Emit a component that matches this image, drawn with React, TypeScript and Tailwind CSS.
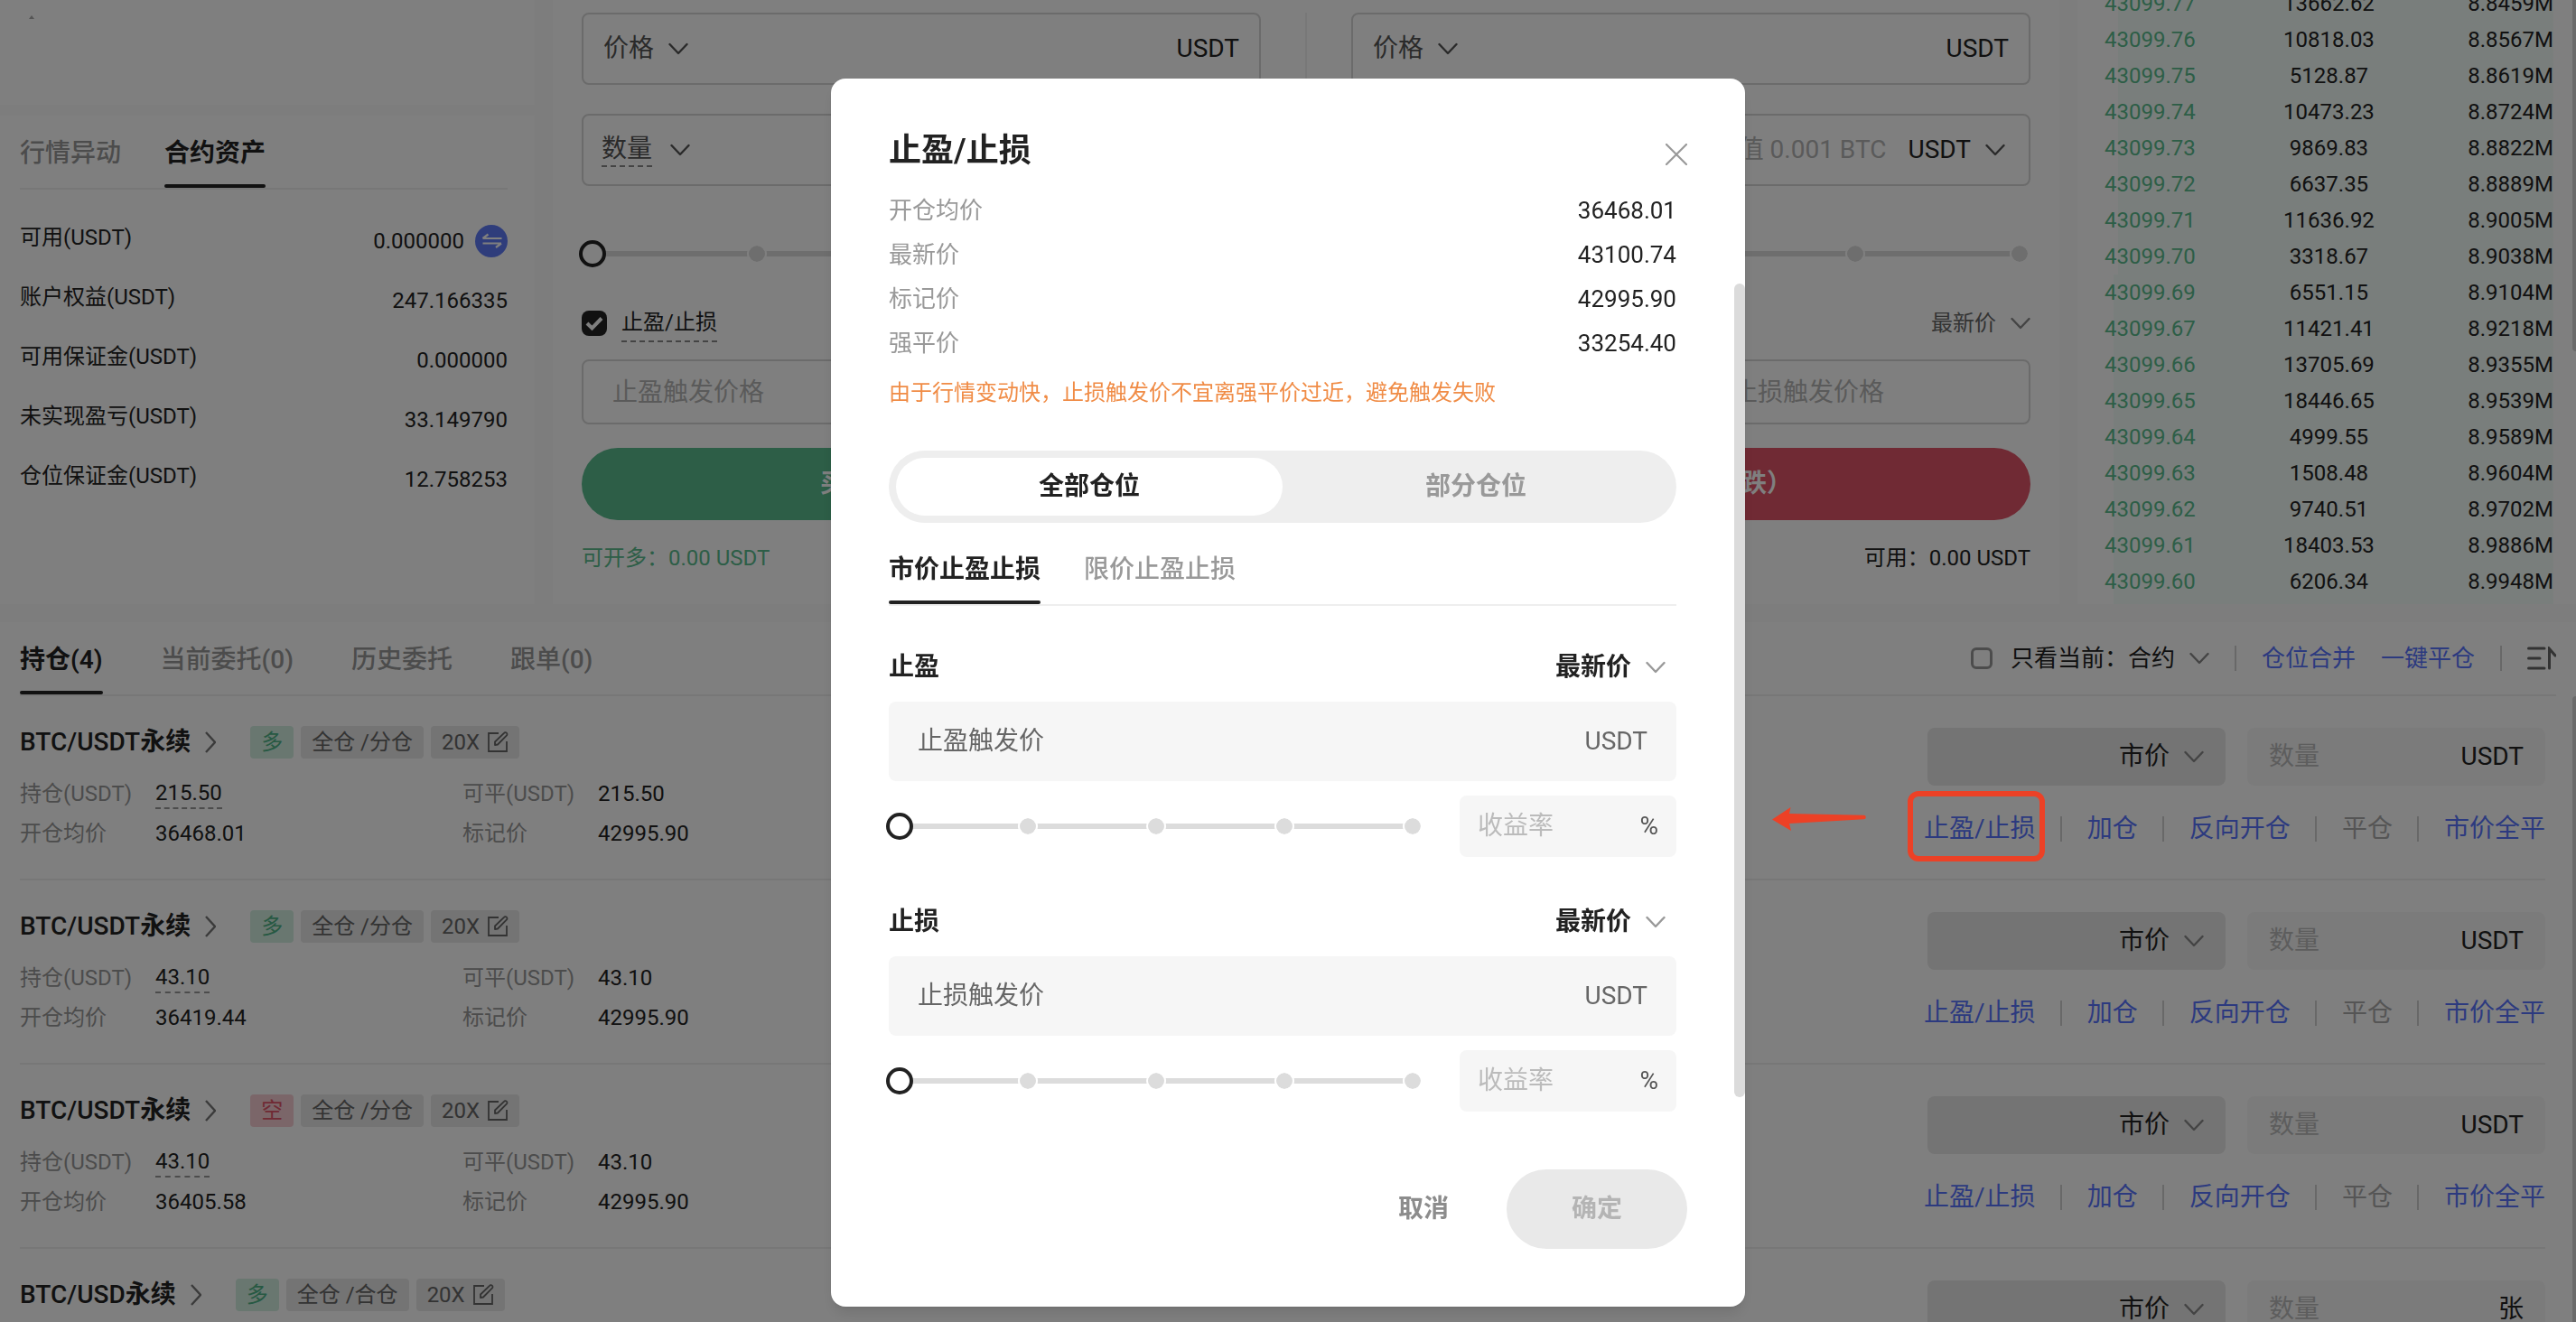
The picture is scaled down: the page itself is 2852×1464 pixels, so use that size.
import type { ReactNode } from 'react'
import { clsx } from 'clsx'

const orderBook = [
  ['43099.77', '13662.62', '8.8459M', 3],
  ['43099.76', '10818.03', '8.8567M', 3],
  ['43099.75', '5128.87', '8.8619M', 3],
  ['43099.74', '10473.23', '8.8724M', 3],
  ['43099.73', '9869.83', '8.8822M', 3],
  ['43099.72', '6637.35', '8.8889M', 3],
  ['43099.71', '11636.92', '8.9005M', 3],
  ['43099.70', '3318.67', '8.9038M', 3],
  ['43099.69', '6551.15', '8.9104M', 2],
  ['43099.67', '11421.41', '8.9218M', 2],
  ['43099.66', '13705.69', '8.9355M', 2],
  ['43099.65', '18446.65', '8.9539M', 2],
  ['43099.64', '4999.55', '8.9589M', 2],
  ['43099.63', '1508.48', '8.9604M', 2],
  ['43099.62', '9740.51', '8.9702M', 2],
  ['43099.61', '18403.53', '8.9886M', 2],
  ['43099.60', '6206.34', '8.9948M', 2],
] as const

const assets = [
  { label: '可用(USDT)', value: '0.000000', transfer: true },
  { label: '账户权益(USDT)', value: '247.166335' },
  { label: '可用保证金(USDT)', value: '0.000000' },
  { label: '未实现盈亏(USDT)', value: '33.149790' },
  { label: '仓位保证金(USDT)', value: '12.758253' },
]

type Position = {
  pair: string
  side: '多' | '空'
  mode: string
  size: string
  entry: string
  unit: string
  marked?: boolean
}

const positions: Position[] = [
  { pair: 'BTC/USDT', side: '多', mode: '全仓 /分仓', size: '215.50', entry: '36468.01', unit: 'USDT', marked: true },
  { pair: 'BTC/USDT', side: '多', mode: '全仓 /分仓', size: '43.10', entry: '36419.44', unit: 'USDT' },
  { pair: 'BTC/USDT', side: '空', mode: '全仓 /分仓', size: '43.10', entry: '36405.58', unit: 'USDT' },
  { pair: 'BTC/USD', side: '多', mode: '全仓 /合仓', size: '', entry: '', unit: '张' },
]

const prices = [
  ['开仓均价', '36468.01'],
  ['最新价', '43100.74'],
  ['标记价', '42995.90'],
  ['强平价', '33254.40'],
]

const Chevron = ({ className }: { className?: string }) => (
  <svg viewBox="0 0 22 14" fill="none" className={clsx('w-[22px] h-3.5 shrink-0 pointer-events-none', className)}>
    <path d="M1.500 2L11 12L20.500 2" stroke="currentColor" strokeWidth="2.400" strokeLinecap="round" strokeLinejoin="round" />
  </svg>
)

const Picker = ({ label, value, className, chevron }: { label: string; value: string; className?: string; chevron?: string }) => (
  <span className="flex items-center gap-4">
    <select aria-label={label} className={clsx('appearance-none bg-transparent field-sizing-content leading-10 outline-none', className)}>
      <option>{value}</option>
    </select>
    <Chevron className={chevron} />
  </span>
)

const Tabs = ({ items, className }: { items: string[]; className?: string }) => (
  <div role="tablist" className={clsx('flex border-b-2 border-[#eeeeee] text-[28px] leading-10 font-semibold', className)}>
    {items.map((item, i) => (
      <button
        key={item}
        role="tab"
        aria-selected={i === 0}
        className={clsx(
          'after:block after:mt-3.5 after:h-1 after:rounded-full',
          i === 0 ? 'text-[#222222] after:bg-[#222222]' : 'font-medium text-[#999999]'
        )}
      >
        {item}
      </button>
    ))}
  </div>
)

const StepSlider = ({ label }: { label: string }) => (
  <div className="relative flex-1 flex items-center h-[30px]">
    <div className="absolute inset-x-3 h-1.5 bg-[#dcdcdc]" />
    <div className="relative w-full flex justify-between px-px">
      {[0, 25, 50, 75, 100].map((step) => (
        <span key={step} className="size-[22px] rounded-full border-2 border-white bg-[#dcdcdc] bg-clip-padding" />
      ))}
    </div>
    <input
      type="range"
      aria-label={label}
      min={0}
      max={100}
      defaultValue={0}
      className="absolute -inset-x-[3px] h-[30px] appearance-none bg-transparent [&::-webkit-slider-thumb]:appearance-none [&::-webkit-slider-thumb]:size-[30px] [&::-webkit-slider-thumb]:rounded-full [&::-webkit-slider-thumb]:border-4 [&::-webkit-slider-thumb]:border-[#222222] [&::-webkit-slider-thumb]:bg-white"
    />
  </div>
)

const AssetPanel = () => (
  <section className="flex flex-col gap-3 min-w-0">
    <div className="h-[116px] bg-white px-8 pt-4">
      <svg viewBox="0 0 6 6" className="size-1.5 text-[#aaaaaa]">
        <path d="M3 1l3 4H0z" fill="currentColor" />
      </svg>
    </div>
    <div className="flex-1 bg-white pl-[22px] pr-[30px] pt-[22px]">
      <div role="tablist" className="flex items-start gap-12 border-b-2 border-[#eeeeee] text-[28px] leading-10">
        <button role="tab" aria-selected={false} className="font-medium text-[#999999]">行情异动</button>
        <button role="tab" aria-selected className="font-semibold text-[#222222] after:block after:mt-3.5 after:h-1 after:rounded-full after:bg-[#222222]">
          合约资产
        </button>
      </div>
      <dl className="pt-[35px] text-2xl text-[#222222]">
        {assets.map((asset) => (
          <div key={asset.label} className="flex justify-between items-start h-[66px]">
            <dt className="leading-9">{asset.label}</dt>
            <dd className="flex items-center gap-3 h-11">
              {asset.value}
              {asset.transfer && (
                <button aria-label="划转" className="size-9 rounded-full bg-[#5f7bf7] text-white">
                  <svg viewBox="0 0 36 36" fill="none" className="size-9">
                    <path d="M8.500 15H29.500M8.500 15L14.500 10.500M8.500 20.500H29M29 20.500L23 25" stroke="currentColor" strokeWidth="2.200" />
                  </svg>
                </button>
              )}
            </dd>
          </div>
        ))}
      </dl>
    </div>
  </section>
)

const TradeForm = ({ side }: { side: 'long' | 'short' }) => {
  const long = side === 'long'

  return (
    <div className="min-w-0 text-[#222222]">
      <label className="flex items-center h-20 px-[22px] border-2 border-[#d6d6d6] rounded-lg text-[28px]">
        <Picker label="价格类型" value="价格" className="text-[#555555]" chevron="text-[#555555]" />
        <input aria-label="价格" className="flex-1 min-w-0 outline-none" />
        USDT
      </label>
      <div className="flex items-center h-20 mt-8 pl-5 pr-[26px] border-2 border-[#d6d6d6] rounded-lg text-[28px]">
        <span className="flex items-center gap-5 text-[#555555]">
          <select aria-label="数量类型" className="appearance-none field-sizing-content leading-9 border-b-2 border-dashed border-[#888888] outline-none">
            <option>数量</option>
          </select>
          <Chevron />
        </span>
        <input aria-label="数量" placeholder="最小值 0.001 BTC" className="flex-1 min-w-0 mr-6 text-right outline-none placeholder:text-[#b4b4b4]" />
        <Picker label="单位" value="USDT" chevron="text-[#555555]" />
      </div>
      <div className="flex mt-[60px]">
        <StepSlider label="仓位比例" />
      </div>
      <div className="flex items-center justify-between h-10 mt-[42px] text-2xl">
        <label className="flex items-center gap-4">
          <span className="relative size-7">
            <input type="checkbox" defaultChecked className="appearance-none block size-7 rounded-lg bg-[#222222]" />
            <svg viewBox="0 0 28 28" fill="none" className="absolute inset-0 size-7 pointer-events-none text-white">
              <path d="M6 14l5.500 5.500L22 8.500" stroke="currentColor" strokeWidth="4" />
            </svg>
          </span>
          <span className="leading-10 border-b-2 border-dashed border-[#888888]">止盈/止损</span>
        </label>
        <Picker label="触发价类型" value="最新价" className="text-[#666666]" chevron="text-[#888888]" />
      </div>
      <div className="grid grid-cols-2 gap-6 mt-5">
        {['止盈触发价格', '止损触发价格'].map((name) => (
          <input
            key={name}
            aria-label={name}
            placeholder={name}
            className="min-w-0 h-[72px] px-8 border-2 border-[#d6d6d6] rounded-lg text-[28px] outline-none placeholder:text-[#b4b4b4]"
          />
        ))}
      </div>
      <button className={clsx('w-full h-20 mt-[26px] rounded-full text-[28px] font-semibold text-white', long ? 'bg-[#5abc8e]' : 'bg-[#e05468]')}>
        {long ? '买入开多（看涨）' : '卖出开空（看跌）'}
      </button>
      <div className="flex justify-between mt-6 text-2xl leading-9">
        <span className={long ? 'text-[#5abc8e]' : 'text-[#e05468]'}>{long ? '可开多' : '可开空'}：0.00 USDT</span>
        <span>可用：0.00 USDT</span>
      </div>
    </div>
  )
}

const OrderBook = () => (
  <section className="bg-white pl-[30px] pr-[25px] overflow-hidden">
    <table className="w-full -mt-4 text-2xl table-fixed">
      <tbody>
        {orderBook.map(([price, amount, total, start]) => (
          <tr
            key={price}
            className="h-10"
            style={{ background: `linear-gradient(to right, transparent ${start}%, #f3fcf8 ${start}%)` }}
          >
            <td className="text-[#5abc8e]">{price}</td>
            <td className="text-center text-[#222222]">{amount}</td>
            <td className="text-right text-[#222222]">{total}</td>
          </tr>
        ))}
      </tbody>
    </table>
    <div className="h-[5px] ml-2.5 bg-[#f3fcf8]" />
  </section>
)

const Chip = ({ className, children }: { className?: string; children: ReactNode }) => (
  <span className={clsx('flex items-center gap-2 h-9 px-3 rounded text-2xl', className)}>{children}</span>
)

const Divider = () => <span className="w-0.5 h-7 bg-[#d0d0d0]" />

const Stat = ({ label, value, dashed }: { label: string; value: string; dashed?: boolean }) => (
  <div className="flex items-center h-9 text-2xl">
    <dt className="w-[150px] text-[#999999]">{label}</dt>
    <dd className={clsx('leading-8 text-[#222222]', dashed && 'border-b-2 border-dashed border-[#999999]')}>{value}</dd>
  </div>
)

const PositionRow = ({ position }: { position: Position }) => (
  <li className="flex items-center justify-between h-[204px] border-b-2 border-[#eeeeee]">
    <div>
      <div className="flex items-center gap-2">
        <a href="#" className="flex items-center gap-4 mr-[30px] text-[28px] leading-9 font-medium text-[#222222]">
          <span>
            {position.pair}
            <span className="font-semibold">永续</span>
          </span>
          <svg viewBox="0 0 12 24" fill="none" className="w-3 h-6 text-[#777777]">
            <path d="M1 1l10 11L1 23" stroke="currentColor" strokeWidth="2.400" />
          </svg>
        </a>
        <Chip className={position.side === '多' ? 'bg-[#d3eee1] text-[#4fb387]' : 'bg-[#f6cdd3] text-[#e05468]'}>{position.side}</Chip>
        <Chip className="bg-[#e8e8e8] text-[#666666]">{position.mode}</Chip>
        <Chip className="bg-[#e8e8e8] text-[#666666]">
          20X
          <svg viewBox="0 0 24 24" fill="none" stroke="currentColor" strokeWidth="1.800" className="size-6">
            <path d="M13 2H2v20h20V11" />
            <path d="M9 15v-3.500L19 1.800a1.800 1.800 0 0 1 3 2.600L12 14.500z" strokeLinejoin="round" />
          </svg>
        </Chip>
      </div>
      <dl className="grid grid-cols-[490px_auto] gap-y-2 mt-[21px]">
        <Stat label="持仓(USDT)" value={position.size} dashed />
        <Stat label="可平(USDT)" value={position.size} />
        <Stat label="开仓均价" value={position.entry} />
        <Stat label="标记价" value="42995.90" />
      </dl>
    </div>
    <div className="w-[684px] text-[28px]">
      <div className="grid grid-cols-2 gap-6">
        <div className="flex items-center justify-end h-16 px-6 rounded-lg bg-[#e8e8e8] text-[#222222]">
          <Picker label="平仓价格" value="市价" chevron="text-[#888888]" />
        </div>
        <label className="flex items-center h-16 px-6 rounded-lg bg-[#f6f6f6] text-[#222222]">
          <input aria-label="平仓数量" placeholder="数量" className="flex-1 min-w-0 outline-none placeholder:text-[#bbbbbb]" />
          {position.unit}
        </label>
      </div>
      <div className="flex items-center justify-between -ml-1 mt-7 leading-10 text-[#5874ff]">
        <span className="relative">
          <button>止盈/止损</button>
          {position.marked && (
            <>
              <span className="absolute z-20 -left-4.5 -top-5.5 w-[152px] h-[78px] rounded-xl border-6 border-[#ec4126] pointer-events-none" />
              <svg viewBox="0 0 104 26" className="absolute z-20 right-full -top-1 mr-16 w-[104px] h-[26px] text-[#ec4126]">
                <path d="M0 13.500L20.500 0l-1.500 7L101.500 8.700a2.300 2.300 0 0 1 0 4.600L19 18l2 8z" fill="currentColor" />
              </svg>
            </>
          )}
        </span>
        <Divider />
        <button>加仓</button>
        <Divider />
        <button>反向开仓</button>
        <Divider />
        <button className="text-[#aaaaaa]">平仓</button>
        <Divider />
        <button>市价全平</button>
      </div>
    </div>
  </li>
)

const Positions = () => (
  <section className="relative flex-1 bg-white px-[22px]">
    <div className="relative pt-[22px]">
      <Tabs items={['持仓(4)', '当前委托(0)', '历史委托', '跟单(0)']} className="gap-16" />
      <div className="absolute right-0 top-5 flex items-center gap-7 h-10 text-[26px] text-[#5874ff]">
        <div className="flex items-center text-[#222222]">
          <label className="flex items-center gap-5">
            <input type="checkbox" className="appearance-none size-6 rounded-md border-3 border-[#999999]" />
            只看当前：
          </label>
          <Picker label="筛选" value="合约" chevron="text-[#888888]" />
        </div>
        <Divider />
        <button>仓位合并</button>
        <button>一键平仓</button>
        <Divider />
        <button aria-label="排序" className="text-[#666666]">
          <svg viewBox="0 0 32 26" fill="none" stroke="currentColor" strokeWidth="3" strokeLinecap="round" className="w-8 h-[26px]">
            <path d="M1.500 2H19M1.500 13H14M1.500 24H19M24.500 24V2.500L31 10" />
          </svg>
        </button>
      </div>
    </div>
    <ul className="pr-3">
      {positions.map((position, i) => (
        <PositionRow key={i} position={position} />
      ))}
    </ul>
    <span className="absolute right-0 top-[82px] bottom-0 w-1 rounded-tl bg-[#d6d6d6]" />
  </section>
)

const TriggerFields = ({ title }: { title: string }) => (
  <fieldset className="text-[28px]">
    <div className="flex items-center justify-between h-10 font-semibold text-[#222222]">
      <span>{title}</span>
      <span className="pr-3">
        <Picker label={`${title}价格类型`} value="最新价" chevron="text-[#999999]" />
      </span>
    </div>
    <label className="flex items-center h-[88px] mt-[18px] px-8 rounded-lg bg-[#f6f6f6] text-[#666666]">
      <input aria-label={`${title}触发价`} placeholder={`${title}触发价`} className="flex-1 min-w-0 outline-none placeholder:text-[#666666]" />
      USDT
    </label>
    <div className="flex items-center gap-10 mt-4">
      <StepSlider label={`${title}比例`} />
      <label className="flex items-center w-60 h-[68px] px-5 rounded-lg bg-[#f6f6f6] text-[#555555]">
        <input aria-label={`${title}收益率`} placeholder="收益率" className="flex-1 min-w-0 outline-none placeholder:text-[#bbbbbb]" />
        %
      </label>
    </div>
  </fieldset>
)

const StopDialog = () => (
  <div className="fixed inset-0 z-10 flex items-start justify-center pt-[87px] bg-black/50">
    <div role="dialog" aria-labelledby="stop-title" className="relative w-[1012px] pt-14 pb-16 rounded-2xl bg-white shadow-lg">
      <div className="flex items-center justify-between px-16">
        <h2 id="stop-title" className="text-4xl leading-12 font-semibold text-[#222222]">止盈/止损</h2>
        <button aria-label="关闭" className="pt-2 text-[#999999]">
          <svg viewBox="0 0 24 24" fill="none" className="size-6">
            <path d="M1 1l22 22M23 1L1 23" stroke="currentColor" strokeWidth="2.200" strokeLinecap="round" />
          </svg>
        </button>
      </div>
      <div className="pl-16 pr-19">
        <dl className="mt-[18px] text-[26px]">
          {prices.map(([label, value]) => (
            <div key={label} className="flex items-center justify-between h-[49px]">
              <dt className="text-[#999999]">{label}</dt>
              <dd className="text-[#222222]">{value}</dd>
            </div>
          ))}
        </dl>
        <p className="mt-3 text-2xl leading-9 text-[#f08c46]">由于行情变动快，止损触发价不宜离强平价过近，避免触发失败</p>
        <div className="grid grid-cols-2 h-20 mt-[46px] p-2 rounded-full bg-[#eeeeee] text-[28px] font-semibold">
          <button className="rounded-full bg-white text-[#222222]">全部仓位</button>
          <button className="text-[#999999]">部分仓位</button>
        </div>
        <Tabs items={['市价止盈止损', '限价止盈止损']} className="gap-12 mt-8" />
        <div className="flex flex-col gap-[52px] mt-12">
          <TriggerFields title="止盈" />
          <TriggerFields title="止损" />
        </div>
      </div>
      <div className="flex justify-end gap-16 mt-16 px-16 text-[28px] font-semibold">
        <button className="text-[#8c8c8c]">取消</button>
        <button disabled className="w-50 h-22 rounded-full bg-[#e9e9e9] text-[#b4b4b4]">确定</button>
      </div>
      <span className="absolute right-0 top-[227px] w-3 h-[901px] rounded-full bg-[#dbdbdb]" />
    </div>
  </div>
)

const App = () => {
  return (
    <div className="flex flex-col gap-5 h-screen overflow-hidden bg-[#fafafa] font-[Roboto,'Noto_Sans_CJK_SC',sans-serif]">
      <div className="relative grid grid-cols-[592px_1fr_552px] gap-5">
        <AssetPanel />
        <section className="grid grid-cols-[1fr_2px_1fr] gap-[49px] px-8 pt-3.5 pb-[33px] bg-white">
          <TradeForm side="long" />
          <span className="bg-[#f0f0f0]" />
          <TradeForm side="short" />
        </section>
        <OrderBook />
        <span className="absolute right-0 top-0 w-1 h-[389px] rounded-bl bg-[#d6d6d6]" />
      </div>
      <Positions />
      <StopDialog />
    </div>
  )
}

export default App
